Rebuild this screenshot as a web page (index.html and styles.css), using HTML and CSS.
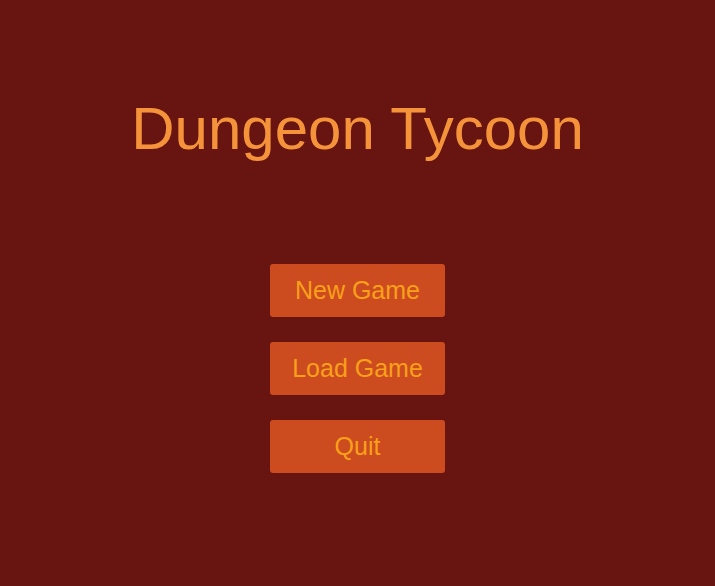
FILE: index.html
```html
<!DOCTYPE html>
<html lang="en">

<head>
  <meta charset="UTF-8">
  <meta name="viewport" content="width=device-width, initial-scale=1.0">
  <title>Dungeon Tycoon</title>
  <link rel="stylesheet" href="styles.css">
</head>

<body>
  <div class="menu">
    <h1 class="title">Dungeon Tycoon</h1>
    <ul class="menu-list">
      <li><button class="menu-btn">New Game</button></li>
      <li><button class="menu-btn">Load Game</button></li>
      <li><button class="menu-btn">Quit</button></li>
    </ul>
  </div>
</body>

</html>
```

FILE: styles.css
```css
* {
  margin: 0;
  padding: 0;
}

li {
  list-style: none;
}

html,
body {
  height: 100%;
}

body {
  background-color: #681410;
  font-family: "Liberation Sans", Arial, sans-serif;
}

.menu {
  display: flex;
  flex-direction: column;
  align-items: center;
  padding-top: 94px;
}

.title {
  font-size: 60px;
  font-weight: normal;
  line-height: 70px;
  color: #f5933a;
}

.menu-list {
  display: flex;
  flex-direction: column;
  gap: 25px;
  margin-top: 100px;
}

.menu-btn {
  display: block;
  width: 175px;
  height: 53px;
  border: none;
  border-radius: 3px;
  background-color: #cc4c1f;
  color: #f9a01a;
  font-family: inherit;
  font-size: 25px;
  cursor: pointer;
}
```
